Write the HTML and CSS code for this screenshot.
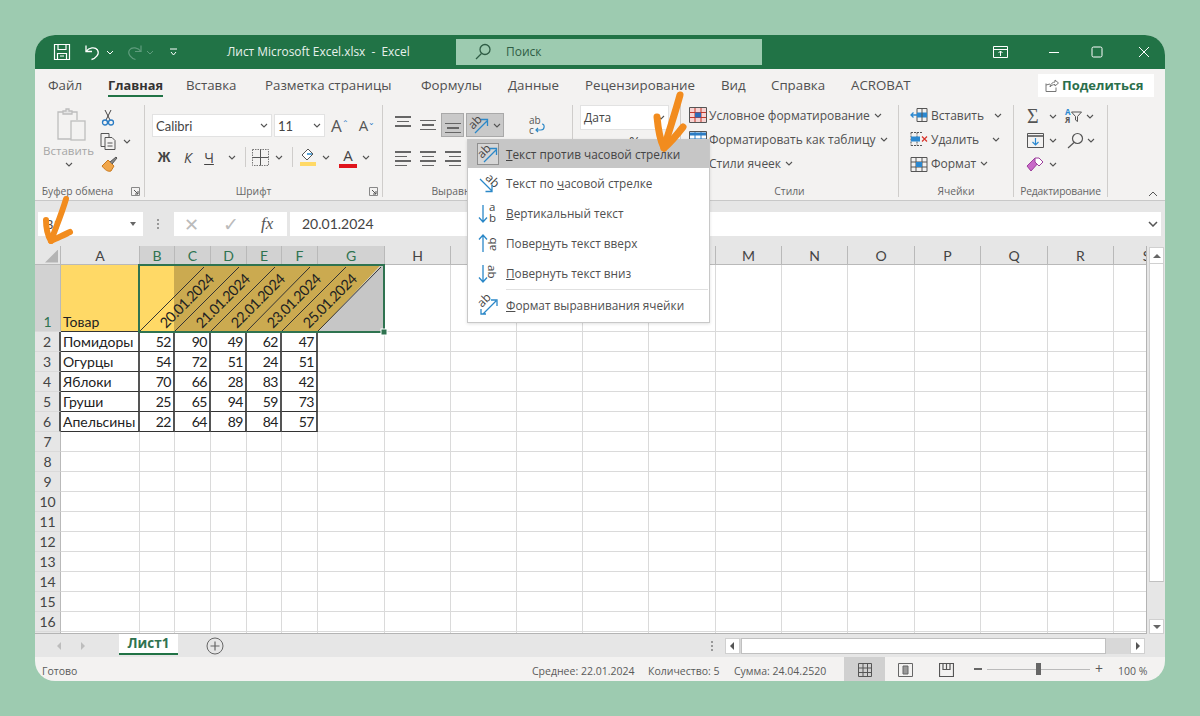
FILE: index.html
```html
<!DOCTYPE html>
<html lang="ru">
<head>
    <meta charset="UTF-8">
    <title>Лист Microsoft Excel.xlsx - Excel</title>
    <link rel="stylesheet" href="styles.css">
</head>
<body>

<svg class="defs" width="0" height="0">
    <defs>
        <symbol id="chev" viewBox="0 0 8 5"><path d="M1 1l3 3 3-3" fill="none" stroke="#555" stroke-width="1.1"/></symbol>
        <symbol id="launch" viewBox="0 0 9 9"><path d="M.5 8.5V.5h8v8z" fill="none" stroke="#888"/><path d="M3 3l4 4M7 4v3H4" fill="none" stroke="#555"/></symbol>
        <symbol id="ab-ccw" viewBox="0 0 22 22">
            <text x="2" y="13" font-size="12" fill="#444" font-family="Open Sans" transform="rotate(-45 7 11)">ab</text>
            <path d="M7 19L19 7M13 5.500h6.500V12" fill="none" stroke="#2b88c8" stroke-width="1.300"/>
        </symbol>
    </defs>
</svg>

<div class="window">

    <!-- Title bar -->
    <div class="titlebar">
        <svg class="qat-save" width="18" height="18" viewBox="0 0 18 18" fill="none" stroke="#fff" stroke-width="1.200"><path d="M1.500 1.500h15v15h-15z"/><path d="M5 1.500v5h8v-5M4.500 16.500v-6h9v6M7 13h4"/></svg>
        <svg class="qat-undo" width="17" height="17" viewBox="0 0 17 17" fill="none" stroke="#fff" stroke-width="1.300"><path d="M2 1.500v6h6"/><path d="M2 7.500c3-4 9-5 11.500-1.500 2.500 4-2 8.500-6 9.500"/></svg>
        <svg class="qat-chev" width="8" height="5" viewBox="0 0 8 5"><path d="M1 1l3 3 3-3" fill="none" stroke="#fff"/></svg>
        <svg class="qat-redo" width="17" height="17" viewBox="0 0 17 17" fill="none" stroke="#5f9c7d" stroke-width="1.200"><path d="M15 1.500v6H9"/><path d="M15 7.500c-3-4-9-5-11.500-1.500-2.500 4 2 8.500 6 9.500"/></svg>
        <svg class="qat-chev2" width="8" height="5" viewBox="0 0 8 5"><path d="M1 1l3 3 3-3" fill="none" stroke="#5f9c7d"/></svg>
        <svg class="qat-more" width="9" height="8" viewBox="0 0 9 8" fill="none" stroke="#fff"><path d="M1 1h7M2 4l2.500 3L7 4"/></svg>
        <span class="doc-title">Лист Microsoft Excel.xlsx&nbsp; -&nbsp; Excel</span>
        <div class="searchbox">
            <svg width="18" height="18" viewBox="0 0 18 18" fill="none" stroke="#2f5d45" stroke-width="1.300"><circle cx="11" cy="6.500" r="5"/><path d="M7.500 10.500L2 16"/></svg>
            <span>Поиск</span>
        </div>
        <div class="win-btns">
            <svg width="15" height="12" viewBox="0 0 15 12" fill="none" stroke="#fff"><path d="M.5.500h14v11H.5zM.5 3.500h14"/><path d="M7.500 10V5M5.500 7l2-2 2 2" /></svg>
            <svg width="12" height="12" viewBox="0 0 12 12" stroke="#fff"><path d="M1 6.500h10"/></svg>
            <svg width="12" height="12" viewBox="0 0 12 12" fill="none" stroke="#fff"><rect x="1" y="1" width="10" height="10" rx="1.500"/></svg>
            <svg width="12" height="12" viewBox="0 0 12 12" stroke="#fff"><path d="M1 1l10 10M11 1L1 11"/></svg>
        </div>
    </div>

    <!-- Tabs -->
    <div class="tabs">
        <span class="tab">Файл</span>
        <span class="tab active">Главная</span>
        <span class="tab">Вставка</span>
        <span class="tab">Разметка страницы</span>
        <span class="tab">Формулы</span>
        <span class="tab">Данные</span>
        <span class="tab">Рецензирование</span>
        <span class="tab">Вид</span>
        <span class="tab">Справка</span>
        <span class="tab">ACROBAT</span>
        <button class="share">
            <svg width="14" height="13" viewBox="0 0 14 13" fill="none" stroke="#777"><path d="M1 4.500v8h10v-4M1 6l4-1M5 8c0-3 3-5 5-5V1l3.500 3L10 7V5.500C8 5.500 6 6.500 5 8z"/></svg>
            Поделиться
        </button>
    </div>

    <!-- Ribbon -->
    <div class="ribbon">

        <div class="group g-clip">
            <div class="group-body clip-body">
                <div class="paste">
                    <svg class="paste-icon" width="30" height="34" viewBox="0 0 30 34" fill="none" stroke="#bdbdbd" stroke-width="1.300"><path d="M6 4H1v27h13"/><path d="M15 4h5v8"/><path d="M6 6V3h3V1h3v2h3v3z" fill="#e4e4e4"/><rect x="14" y="13" width="14" height="19" fill="#f3f2f1"/></svg>
                    <span class="paste-label">Вставить</span>
                    <svg width="8" height="5"><use href="#chev"/></svg>
                </div>
                <div class="clip-tools">
                    <svg width="14" height="17" viewBox="0 0 14 17" fill="none" stroke="#444"><path d="M4 1l5 10M10 1L5 11"/><circle cx="4" cy="13.500" r="2.500" stroke="#2b7cc4" stroke-width="1.300"/><circle cx="10" cy="13.500" r="2.500" stroke="#2b7cc4" stroke-width="1.300"/></svg>
                    <div class="copy-row">
                        <svg width="18" height="18" viewBox="0 0 18 18" fill="#f3f2f1" stroke="#555"><path d="M1 1.500h8v13H1z"/><path d="M5 5.500h7l3 3v9H5z"/><path d="M7.500 11h5M7.500 14h5"/></svg>
                        <svg width="8" height="5"><use href="#chev"/></svg>
                    </div>
                    <svg width="17" height="17" viewBox="0 0 17 17"><path d="M1 10l6-6 6 6-3 5c-3 1-6-1-9-5z" fill="#f0a64a" stroke="#c8791e"/><path d="M9 6l6-5 1 1-5 6" fill="#888" stroke="#555"/></svg>
                </div>
            </div>
            <div class="group-label">Буфер обмена<svg class="launch" width="9" height="9"><use href="#launch"/></svg></div>
        </div>

        <div class="group g-font">
            <div class="group-body font-body">
                <div class="row font-row1">
                    <div class="combo combo-font"><span>Calibri</span><svg width="8" height="5"><use href="#chev"/></svg></div>
                    <div class="combo combo-size"><span>11</span><svg width="8" height="5"><use href="#chev"/></svg></div>
                    <span class="grow-a">A<sup>⌃</sup></span>
                    <span class="shrink-a">A<sup>⌄</sup></span>
                </div>
                <div class="row font-row2">
                    <b class="fmt fmt-b">Ж</b>
                    <i class="fmt fmt-i">К</i>
                    <u class="fmt fmt-u">Ч</u>
                    <svg class="c1" width="8" height="5"><use href="#chev"/></svg>
                    <span class="vsep"></span>
                    <svg width="17" height="17" viewBox="0 0 17 17" fill="none" stroke="#777"><path d="M.500.500h16v16H.500z" stroke-dasharray="1.500 1"/><path d="M8.500.500v16M.500 8.500h16" stroke="#555"/></svg>
                    <svg class="c2" width="8" height="5"><use href="#chev"/></svg>
                    <span class="vsep"></span>
                    <svg width="18" height="18" viewBox="0 0 18 18"><path d="M9 1l-6 6 5 5 6-6z" fill="#fff" stroke="#555"/><path d="M8 6l5 0" stroke="#2b88c8" stroke-width="1.500"/><rect x="1" y="14" width="16" height="4" fill="#ffd966"/></svg>
                    <svg class="c3" width="8" height="5"><use href="#chev"/></svg>
                    <span class="fontcolor">A</span>
                    <svg class="c4" width="8" height="5"><use href="#chev"/></svg>
                </div>
            </div>
            <div class="group-label label-font">Шрифт<svg class="launch" width="9" height="9"><use href="#launch"/></svg></div>
        </div>

        <div class="group g-align">
            <div class="group-body align-body">
                <div class="row align-row1">
                    <span class="lines l-top"><i></i><i class="s"></i><i></i></span>
                    <span class="lines l-mid"><i></i><i class="s"></i><i></i></span>
                    <span class="align-active"><span class="lines"><i></i><i class="s"></i><i></i></span></span>
                    <span class="orient-btn"><svg width="22" height="22"><use href="#ab-ccw"/></svg><svg width="8" height="5"><use href="#chev"/></svg></span>
                    <svg class="wrap-icon" width="18" height="22" viewBox="0 0 18 22"><text x="1" y="10" font-size="10" fill="#555" font-family="Open Sans">ab</text><text x="1" y="20" font-size="10" fill="#555" font-family="Open Sans">c</text><path d="M14 10c3 0 3 6-1 6H8M10 14l-2 2 2 2" fill="none" stroke="#2b88c8" stroke-width="1.200"/></svg>
                </div>
                <div class="row align-row2">
                    <span class="lines l-left"><i></i><i class="s"></i><i></i><i class="s"></i></span>
                    <span class="lines l-center"><i></i><i class="s"></i><i></i><i class="s"></i></span>
                    <span class="lines l-right"><i></i><i class="s"></i><i></i><i class="s"></i></span>
                </div>
            </div>
            <div class="group-label label-align">Выравнивание</div>
        </div>

        <div class="group g-num">
            <div class="group-body num-body">
                <div class="combo combo-num"><span>Дата</span><svg width="8" height="5"><use href="#chev"/></svg></div>
                <div class="num-row"><span class="num-bar"></span><span class="num-pct">%</span></div>
            </div>
        </div>

        <div class="group g-styles">
            <div class="group-body list-body">
                <div class="list-row">
                    <svg width="18" height="16" viewBox="0 0 18 16"><path d="M.500.500h17v15H.500z" fill="#f6d3d3" stroke="#555"/><path d="M1 5.500h16M1 10.500h16M6 1v14M12 1v14" stroke="#c0392b"/><path d="M6 5.500h6v5H6z" fill="#2b6cb8"/></svg>
                    <span>Условное форматирование</span><svg class="sc" width="8" height="5"><use href="#chev"/></svg>
                </div>
                <div class="list-row">
                    <svg width="18" height="16" viewBox="0 0 18 16" fill="none"><path d="M.500.500h17v15H.500z" fill="#fff" stroke="#555"/><path d="M1 3h16" stroke="#2b7cc4" stroke-width="3"/><path d="M1 8h16M1 12h16M6 1v14M12 1v14" stroke="#2b7cc4"/></svg>
                    <span>Форматировать как таблицу</span><svg class="sc" width="8" height="5"><use href="#chev"/></svg>
                </div>
                <div class="list-row">
                    <svg width="18" height="16" viewBox="0 0 18 16"><path d="M.500.500h17v15H.500z" fill="#fff" stroke="#555"/></svg>
                    <span>Стили ячеек</span><svg class="sc" width="8" height="5"><use href="#chev"/></svg>
                </div>
            </div>
            <div class="group-label label-styles">Стили</div>
        </div>

        <div class="group g-cells">
            <div class="group-body list-body">
                <div class="list-row">
                    <svg width="18" height="16" viewBox="0 0 18 16" fill="none"><path d="M7 1.500h10v13H7z" stroke="#555"/><path d="M7 5.500h10v5H7z" fill="#2b88d0"/><path d="M1 8h6M3.500 5.500L1 8l2.500 2.500" stroke="#2b88d0" stroke-width="1.300"/><path d="M12 1v14" stroke="#555"/></svg>
                    <span>Вставить</span><svg class="cc1" width="8" height="5"><use href="#chev"/></svg>
                </div>
                <div class="list-row">
                    <svg width="18" height="16" viewBox="0 0 18 16" fill="none"><path d="M1 1.500h12M1 14.500h12M1 1.500v13M7 1.500v13" stroke="#555" stroke-dasharray="2 1"/><path d="M1 5.500h9v5H1z" fill="#2b88d0"/><path d="M12 5.500l5 5M17 5.500l-5 5" stroke="#d9342b" stroke-width="1.200"/></svg>
                    <span>Удалить</span><svg class="cc2" width="8" height="5"><use href="#chev"/></svg>
                </div>
                <div class="list-row">
                    <svg width="18" height="18" viewBox="0 0 18 18" fill="none"><path d="M1 3.500h16v14H1z" stroke="#555"/><path d="M1 8h16M1 13h16M6 3v15M12 3v15" stroke="#555"/><path d="M6 8h6v5H6z" fill="#2b88d0"/></svg>
                    <span>Формат</span><svg class="cc3" width="8" height="5"><use href="#chev"/></svg>
                </div>
            </div>
            <div class="group-label">Ячейки</div>
        </div>

        <div class="group g-edit">
            <div class="group-body edit-body">
                <div class="edit-row">
                    <span class="sigma">Σ</span><svg class="ec1" width="8" height="5"><use href="#chev"/></svg>
                    <span class="sort-icon"><span class="sort-az"><em>А</em><em class="sort-z">Я</em></span><svg width="11" height="11" viewBox="0 0 11 11" fill="none" stroke="#555"><path d="M.500 1h10L6.500 5.500v5l-2-1.500V5.500z"/></svg></span>
                    <svg class="ec2" width="8" height="5"><use href="#chev"/></svg>
                </div>
                <div class="edit-row">
                    <svg class="fill-icon" width="17" height="15" viewBox="0 0 17 15" fill="none"><path d="M.500.500h16v14H.500z" stroke="#555"/><path d="M1 3h15" stroke="#777" stroke-width="2"/><path d="M8.500 5v7M5.500 9l3 3 3-3" stroke="#2b88d0" stroke-width="1.200"/></svg>
                    <svg class="ec3" width="8" height="5"><use href="#chev"/></svg>
                    <svg class="find-icon" width="17" height="17" viewBox="0 0 17 17" fill="none" stroke="#555" stroke-width="1.200"><circle cx="10.500" cy="6.500" r="5"/><path d="M7 10.500L1 16"/></svg>
                    <svg class="ec4" width="8" height="5"><use href="#chev"/></svg>
                </div>
                <div class="edit-row">
                    <svg class="erase-icon" width="18" height="15" viewBox="0 0 18 15"><path d="M1 9l8-8 4 4-8 9z" fill="#c869c8" stroke="#9c3f9c"/><path d="M9 1l4-0 4 4-4 4-4-4z" fill="#fff" stroke="#9c3f9c"/></svg>
                    <svg class="ec3" width="8" height="5"><use href="#chev"/></svg>
                </div>
            </div>
            <div class="group-label label-edit">Редактирование</div>
        </div>

        <svg class="collapse" width="10" height="6" viewBox="0 0 10 6" fill="none" stroke="#555"><path d="M1 5l4-4 4 4"/></svg>
    </div>

    <!-- Formula bar -->
    <div class="formula">
        <div class="namebox"><span>B1</span><span class="drop"></span></div>
        <span class="grip"><i></i><i></i><i></i></span>
        <div class="fx-btns">
            <span class="fx-x">✕</span>
            <span class="fx-ok">✓</span>
            <span class="fx">fx</span>
        </div>
        <div class="fx-input"><span>20.01.2024</span>
            <svg width="10" height="6" viewBox="0 0 10 6" fill="none" stroke="#555" stroke-width="1.500"><path d="M1 1l4 4 4-4"/></svg>
        </div>
    </div>

    <!-- Sheet -->
    <div class="sheet-wrap">
        <div class="sheet">
            <table class="grid">
                <colgroup>
                    <col class="c-hd"><col class="c-a"><col class="c-35"><col class="c-36"><col class="c-36"><col class="c-35"><col class="c-36"><col class="c-67"><col class="c-66"><col class="c-66"><col class="c-66"><col class="c-66"><col class="c-67"><col class="c-66"><col class="c-66"><col class="c-67"><col class="c-66"><col class="c-67"><col class="c-66"><col class="c-66">
                </colgroup>
                <tr class="head">
                    <th class="corner"><div class="corner-tri"></div></th>
                    <th>A</th><th class="sel">B</th><th class="sel">C</th><th class="sel">D</th><th class="sel">E</th><th class="sel">F</th><th class="sel">G</th>
                    <th>H</th><th>I</th><th>J</th><th>K</th><th>L</th><th>M</th><th>N</th><th>O</th><th>P</th><th>Q</th><th>R</th><th>S</th>
                </tr>
                <tr class="row-first">
                    <th class="rn sel">1</th><td class="txt yellow">Товар</td><td></td><td></td><td></td><td></td><td></td><td></td>
                    <td></td><td></td><td></td><td></td><td></td><td></td><td></td><td></td><td></td><td></td><td></td><td></td>
                </tr>
                <tr>
                    <th class="rn dark">2</th><td class="txt b">Помидоры</td><td class="n b">52</td><td class="n b">90</td><td class="n b">49</td><td class="n b">62</td><td class="n b">47</td><td></td>
                    <td></td><td></td><td></td><td></td><td></td><td></td><td></td><td></td><td></td><td></td><td></td><td></td>
                </tr>
                <tr>
                    <th class="rn dark">3</th><td class="txt b">Огурцы</td><td class="n b">54</td><td class="n b">72</td><td class="n b">51</td><td class="n b">24</td><td class="n b">51</td><td></td>
                    <td></td><td></td><td></td><td></td><td></td><td></td><td></td><td></td><td></td><td></td><td></td><td></td>
                </tr>
                <tr>
                    <th class="rn dark">4</th><td class="txt b">Яблоки</td><td class="n b">70</td><td class="n b">66</td><td class="n b">28</td><td class="n b">83</td><td class="n b">42</td><td></td>
                    <td></td><td></td><td></td><td></td><td></td><td></td><td></td><td></td><td></td><td></td><td></td><td></td>
                </tr>
                <tr>
                    <th class="rn dark">5</th><td class="txt b">Груши</td><td class="n b">25</td><td class="n b">65</td><td class="n b">94</td><td class="n b">59</td><td class="n b">73</td><td></td>
                    <td></td><td></td><td></td><td></td><td></td><td></td><td></td><td></td><td></td><td></td><td></td><td></td>
                </tr>
                <tr>
                    <th class="rn dark">6</th><td class="txt b">Апельсины</td><td class="n b">22</td><td class="n b">64</td><td class="n b">89</td><td class="n b">84</td><td class="n b">57</td><td></td>
                    <td></td><td></td><td></td><td></td><td></td><td></td><td></td><td></td><td></td><td></td><td></td><td></td>
                </tr>
                <tr><th class="rn">7</th><td></td><td></td><td></td><td></td><td></td><td></td><td></td><td></td><td></td><td></td><td></td><td></td><td></td><td></td><td></td><td></td><td></td><td></td><td></td></tr>
                <tr><th class="rn">8</th><td></td><td></td><td></td><td></td><td></td><td></td><td></td><td></td><td></td><td></td><td></td><td></td><td></td><td></td><td></td><td></td><td></td><td></td><td></td></tr>
                <tr><th class="rn">9</th><td></td><td></td><td></td><td></td><td></td><td></td><td></td><td></td><td></td><td></td><td></td><td></td><td></td><td></td><td></td><td></td><td></td><td></td><td></td></tr>
                <tr><th class="rn">10</th><td></td><td></td><td></td><td></td><td></td><td></td><td></td><td></td><td></td><td></td><td></td><td></td><td></td><td></td><td></td><td></td><td></td><td></td><td></td></tr>
                <tr><th class="rn">11</th><td></td><td></td><td></td><td></td><td></td><td></td><td></td><td></td><td></td><td></td><td></td><td></td><td></td><td></td><td></td><td></td><td></td><td></td><td></td></tr>
                <tr><th class="rn">12</th><td></td><td></td><td></td><td></td><td></td><td></td><td></td><td></td><td></td><td></td><td></td><td></td><td></td><td></td><td></td><td></td><td></td><td></td><td></td></tr>
                <tr><th class="rn">13</th><td></td><td></td><td></td><td></td><td></td><td></td><td></td><td></td><td></td><td></td><td></td><td></td><td></td><td></td><td></td><td></td><td></td><td></td><td></td></tr>
                <tr><th class="rn">14</th><td></td><td></td><td></td><td></td><td></td><td></td><td></td><td></td><td></td><td></td><td></td><td></td><td></td><td></td><td></td><td></td><td></td><td></td><td></td></tr>
                <tr><th class="rn">15</th><td></td><td></td><td></td><td></td><td></td><td></td><td></td><td></td><td></td><td></td><td></td><td></td><td></td><td></td><td></td><td></td><td></td><td></td><td></td></tr>
                <tr><th class="rn">16</th><td></td><td></td><td></td><td></td><td></td><td></td><td></td><td></td><td></td><td></td><td></td><td></td><td></td><td></td><td></td><td></td><td></td><td></td><td></td></tr>
                <tr><th class="rn"></th><td></td><td></td><td></td><td></td><td></td><td></td><td></td><td></td><td></td><td></td><td></td><td></td><td></td><td></td><td></td><td></td><td></td><td></td><td></td></tr>
            </table>

            <!-- rotated header cells B1:G1 with the selection frame -->
            <svg class="rotated" width="250" height="72" viewBox="0 0 250 72">
                <rect x="1" y="1" width="35" height="67" fill="#ffd966"/>
                <path d="M36 1H243L180 68H36z" fill="#cbaa50"/>
                <path d="M243 1h3v67h-66z" fill="#c6c6c6"/>
                <g stroke="#333" stroke-width="1">
                    <path d="M2 67L66 3M37 67L101 3M73 67L137 3M109 67L172 3M144 67L208 3M180 67L243 3"/>
                </g>
                <g class="rot-text">
                    <text transform="translate(28 65) rotate(-45)">20.01.2024</text>
                    <text transform="translate(64 65) rotate(-45)">21.01.2024</text>
                    <text transform="translate(99 65) rotate(-45)">22.01.2024</text>
                    <text transform="translate(135 65) rotate(-45)">23.01.2024</text>
                    <text transform="translate(171 65) rotate(-45)">25.01.2024</text>
                </g>
                <rect x="1" y="1" width="245" height="67" fill="none" stroke="#2f7350" stroke-width="2"/>
                <rect x="243" y="65" width="6" height="6" fill="#2f7350" stroke="#fff"/>
            </svg>
        </div>
        <div class="vscroll">
            <div class="vbtn"><span class="tri-up"></span></div>
            <div class="vthumb"></div>
            <div class="vbtn vbtn-down"><span class="tri-down"></span></div>
        </div>
    </div>

    <!-- Sheet tabs -->
    <div class="sheetbar">
        <span class="tri-left nav1"></span>
        <span class="tri-right nav2"></span>
        <div class="sheet-tab">Лист1</div>
        <svg class="add-sheet" width="18" height="18" viewBox="0 0 18 18" fill="none" stroke="#666"><circle cx="9" cy="9" r="8"/><path d="M9 4.500v9M4.500 9h9" stroke-width="1.200"/></svg>
        <span class="grip grip-h"><i></i><i></i><i></i></span>
        <div class="hscroll">
            <div class="hbtn"><span class="tri-left dark"></span></div>
            <div class="hthumb"></div>
            <div class="hbtn hbtn-r"><span class="tri-right dark"></span></div>
        </div>
    </div>

    <!-- Status bar -->
    <div class="statusbar">
        <span class="stat ready">Готово</span>
        <span class="stat stat-avg">Среднее: 22.01.2024</span>
        <span class="stat stat-count">Количество: 5</span>
        <span class="stat stat-sum">Сумма: 24.04.2520</span>
        <span class="view active">
            <svg width="14" height="14" viewBox="0 0 14 14" fill="none" stroke="#555"><path d="M.500.500h13v13H.500zM.500 5h13M.500 9.500h13M5 .500v13M9.500 .500v13"/></svg>
        </span>
        <span class="view">
            <svg width="15" height="14" viewBox="0 0 15 14" fill="none" stroke="#666"><path d="M.500.500h14v13H.500z"/><path d="M5 3h5v8H5z" fill="#999"/></svg>
        </span>
        <span class="view">
            <svg width="15" height="14" viewBox="0 0 15 14" fill="none" stroke="#555" stroke-width="1.200"><path d="M.500.500h14v13H.500zM4 .500v6h7v-6M7.500 .500v6"/></svg>
        </span>
        <span class="zoom-minus"></span>
        <div class="slider"><span class="thumb"></span></div>
        <span class="zoom-plus">+</span>
        <span class="stat zoom-val">100 %</span>
    </div>

    <!-- Orientation menu -->
    <div class="menu">
        <div class="menu-item hover">
            <span class="menu-ico boxed"><svg width="22" height="22"><use href="#ab-ccw"/></svg></span>
            <span><u>Т</u>екст против часовой стрелки</span>
        </div>
        <div class="menu-item">
            <span class="menu-ico">
                <svg width="22" height="22" viewBox="0 0 22 22"><text x="8" y="10" font-size="12" fill="#444" font-family="Open Sans" transform="rotate(45 12 8)">ab</text><path d="M3 7l12 12M15 13v6.500H8.500" fill="none" stroke="#2b88c8" stroke-width="1.300"/></svg>
            </span>
            <span>Текст по <u>ч</u>асовой стрелке</span>
        </div>
        <div class="menu-item">
            <span class="menu-ico">
                <svg width="22" height="22" viewBox="0 0 22 22"><text x="12" y="9" font-size="11.500" fill="#444" font-family="Open Sans">a</text><text x="12" y="20" font-size="11.500" fill="#444" font-family="Open Sans">b</text><path d="M6 3v17M2 15.500l4 4.500 4-4.500" fill="none" stroke="#2b88c8" stroke-width="1.300"/></svg>
            </span>
            <span><u>В</u>ертикальный текст</span>
        </div>
        <div class="menu-item">
            <span class="menu-ico">
                <svg width="22" height="22" viewBox="0 0 22 22"><text x="0" y="0" font-size="11.500" fill="#444" font-family="Open Sans" transform="translate(19 19) rotate(-90)">ab</text><path d="M6 20V3M2 7.500L6 3l4 4.500" fill="none" stroke="#2b88c8" stroke-width="1.300"/></svg>
            </span>
            <span>Повер<u>н</u>уть текст вверх</span>
        </div>
        <div class="menu-item">
            <span class="menu-ico">
                <svg width="22" height="22" viewBox="0 0 22 22"><text x="0" y="0" font-size="11.500" fill="#444" font-family="Open Sans" transform="translate(11 3) rotate(90)">ab</text><path d="M6 3v17M2 15.500l4 4.500 4-4.500" fill="none" stroke="#2b88c8" stroke-width="1.300"/></svg>
            </span>
            <span><u>П</u>овернуть текст вниз</span>
        </div>
        <div class="menu-sep"></div>
        <div class="menu-item last">
            <span class="menu-ico">
                <svg width="22" height="22" viewBox="0 0 22 22"><text x="2" y="11" font-size="12" fill="#444" font-family="Open Sans" transform="rotate(-45 7 9)">ab</text><path d="M6 20L19 7M14 6h6v6M4 15v5h5" fill="none" stroke="#2b88c8" stroke-width="1.300"/></svg>
            </span>
            <span><u>Ф</u>ормат выравнивания ячейки</span>
        </div>
    </div>

    <!-- Orange hand-drawn arrows -->
    <svg class="arrow arrow-top" width="40" height="65" viewBox="0 0 40 65" fill="none" stroke="#f28c1e" stroke-width="7" stroke-linecap="round" stroke-linejoin="round"><path d="M32 5C28 20 22 38 16 58"/><path d="M9 27c1 11 3 23 7 31 6-5 12-12 19-21"/></svg>
    <svg class="arrow arrow-left" width="36" height="52" viewBox="0 0 36 52" fill="none" stroke="#f28c1e" stroke-width="6" stroke-linecap="round" stroke-linejoin="round"><path d="M26 4C22 18 16 32 11 46"/><path d="M6 25c0 8 2 16 5 21 6-3 13-6 19-9"/></svg>
</div>

</body>
</html>
```

FILE: styles.css
```css
* {
    box-sizing: border-box;
    margin: 0;
    padding: 0;
}

body {
    height: 716px;
    padding: 35px;
    background: #9dcbb0;
    font-family: "Open Sans", sans-serif;
    font-size: 12px;
    color: #444;
    overflow: hidden;
}

.defs { position: absolute; }

svg { flex: none; display: block; }

.window {
    position: relative;
    display: flex;
    flex-direction: column;
    width: 1130px;
    height: 646px;
    border-radius: 20px;
    overflow: hidden;
    background: #f3f2f1;
}

/* Title bar */
.titlebar {
    display: flex;
    align-items: center;
    height: 34px;
    padding-left: 18px;
    background: #217346;
    color: #fff;
}

.qat-undo { margin-left: 13px; }
.qat-chev { margin-left: 5px; }
.qat-redo { margin-left: 12px; }
.qat-chev2 { margin-left: 3px; }
.qat-more { margin-left: 15px; }

.doc-title {
    width: 228px;
    margin: 0 0 2px 49px;
    font-size: 11.900px;
    color: #e8f1ec;
    white-space: nowrap;
}

.searchbox {
    display: flex;
    align-items: center;
    width: 306px;
    height: 26px;
    margin-left: 1px;
    padding-left: 18px;
    background: #9dcbb0;
    color: #2f5d45;
}

.searchbox span { margin: 0 0 2px 14px; }

.win-btns {
    display: flex;
    align-items: center;
    margin-left: 231px;
}

.win-btns svg:nth-child(2) { margin-left: 40px; }
.win-btns svg:nth-child(3) { margin-left: 31px; }
.win-btns svg:nth-child(4) { margin-left: 35px; }

/* Tabs */
.tabs {
    display: flex;
    align-items: center;
    height: 32px;
    padding-left: 13px;
    font-size: 13.300px;
    color: #505050;
}

.tab {
    position: relative;
    white-space: nowrap;
}

.tab:nth-child(1) { width: 60px; }
.tab:nth-child(2) { width: 78px; }
.tab:nth-child(3) { width: 79px; }
.tab:nth-child(4) { width: 156px; }
.tab:nth-child(5) { width: 87px; }
.tab:nth-child(6) { width: 77px; }
.tab:nth-child(7) { width: 136px; }
.tab:nth-child(8) { width: 50px; }
.tab:nth-child(9) { width: 80px; }

.tab.active {
    font-weight: 700;
    font-size: 12.800px;
    color: #333;
}

.tab.active::after {
    content: "";
    position: absolute;
    left: 0;
    width: 55px;
    bottom: -3px;
    height: 2px;
    background: #217346;
}

.share {
    display: flex;
    align-items: center;
    gap: 3px;
    width: 116px;
    height: 23px;
    margin-left: auto;
    margin-right: 11px;
    padding-left: 7px;
    border: 0;
    background: #fff;
    font: 700 13px "Open Sans", sans-serif;
    color: #2b6f4b;
}

/* Ribbon */
.ribbon {
    position: relative;
    display: flex;
    height: 100px;
    padding: 4px 0 0 1px;
    border-bottom: 1px solid #c8c8c8;
}

.group {
    display: flex;
    flex-direction: column;
    height: 92px;
    border-right: 1px solid #cfcdcb;
}

.group-body { flex: 1; }

.group-label {
    position: relative;
    height: 13px;
    font-size: 10.300px;
    line-height: 15px;
    text-align: center;
    color: #666;
    white-space: nowrap;
}

.launch {
    position: absolute;
    right: 4px;
    top: 3px;
}

.row { display: flex; align-items: center; }

.g-clip { width: 109px; }
.g-font { width: 238px; }
.g-align { width: 190px; }
.g-num { width: 108px; }
.g-styles { width: 218px; }
.g-cells { width: 115px; }
.g-edit { width: 94px; }

.g-clip .group-label { padding-right: 25px; }
.label-font { padding-right: 20px; }
.label-edit { letter-spacing: -0.200px; }

.clip-body {
    display: flex;
}

.paste {
    display: flex;
    flex-direction: column;
    align-items: center;
    width: 57px;
    margin-left: 4px;
    padding-top: 3px;
}

.paste-icon { margin-left: 6px; }

.paste-label {
    margin-top: 1px;
    font-size: 11.500px;
    color: #a6a6a6;
}

.paste svg:last-child { margin-top: 4px; }

.clip-tools {
    display: flex;
    flex-direction: column;
    gap: 6px;
    margin-left: 4px;
    padding-top: 4px;
}

.copy-row {
    display: flex;
    align-items: center;
    gap: 5px;
    margin-left: -1px;
}

.combo {
    display: flex;
    align-items: center;
    justify-content: space-between;
    height: 23px;
    padding: 0 3px;
    background: #fff;
    border: 1px solid #e2e2e2;
    font-size: 12px;
    color: #444;
}

.font-body { padding: 9px 0 0 7px; }

.combo-font { width: 120px; font-family: "Lato", sans-serif; font-size: 13px; }
.combo-size { width: 51px; margin-left: 2px; font-family: "Lato", sans-serif; font-size: 13px; }

.grow-a, .shrink-a {
    font-size: 17px;
    line-height: 1;
    color: #555;
}

.grow-a { margin-left: 6px; }
.shrink-a { margin-left: 10px; font-size: 15px; }

.grow-a sup, .shrink-a sup {
    font-size: 8px;
    color: #2b7cc4;
    vertical-align: 6px;
    line-height: 0;
}

.font-row2 { margin-top: 9px; height: 22px; }

.fmt {
    width: 18px;
    text-align: center;
    font-size: 14px;
    color: #444;
}

.fmt-b { margin-left: 3px; font-family: "Liberation Sans", sans-serif; }
.fmt-i { margin-left: 6px; }
.fmt-u { margin-left: 3px; }

.c1 { margin-left: 10px; }
.c2 { margin-left: 6px; }
.c3 { margin-left: 5px; }
.c4 { margin-left: 5px; }

.vsep {
    width: 1px;
    height: 20px;
    margin: 0 6px 0 9px;
    background: #cfcdcb;
}

.fontcolor {
    width: 18px;
    margin-left: 9px;
    text-align: center;
    font-size: 15px;
    line-height: 17px;
    border-bottom: 4px solid #e0141c;
    color: #444;
}

.align-body { padding: 8px 0 0 12px; }

.lines {
    display: flex;
    flex-direction: column;
    gap: 3px;
    width: 16px;
}

.lines i {
    display: block;
    height: 1.500px;
    background: #666;
}

.lines i.s { width: 12px; margin: 0 auto; }

.l-left i.s { margin: 0; }
.l-right i.s { margin: 0 0 0 auto; }

.l-top { margin-top: -7px; }
.l-mid { margin-left: 9px; }

.align-active {
    display: flex;
    align-items: flex-end;
    justify-content: center;
    width: 23px;
    height: 24px;
    margin-left: 5px;
    padding-bottom: 3px;
    background: #c9c9c9;
    border: 1px solid #a9a9a9;
}

.orient-btn {
    display: flex;
    align-items: center;
    gap: 3px;
    width: 38px;
    height: 24px;
    margin-left: 2px;
    padding-left: 1px;
    background: #c9c9c9;
    border: 1px solid #a9a9a9;
}

.wrap-icon { margin-left: 24px; }

.align-row2 { margin-top: 14px; }
.align-row2 .lines { margin-right: 9px; }

.label-align { padding-right: 16px; }

.num-body { padding: 0 0 0 7px; }

.combo-num { width: 89px; height: 25px; }

.num-row { display: flex; align-items: center; margin-top: 2px; }

.num-bar {
    width: 17px;
    height: 2px;
    margin: 4px 0 0 4px;
    background: #666;
}

.num-pct {
    margin-left: 28px;
    font-size: 14px;
}

.list-body { padding: 0 0 0 8px; margin-top: -2px; }

.list-row {
    display: flex;
    align-items: center;
    gap: 2px;
    height: 24px;
    white-space: nowrap;
    color: #505050;
    font-size: 12px;
}

.sc { margin-left: 2px; }

.g-cells .list-body { padding-left: 11px; }
.g-cells .list-row { gap: 3px; }
.cc1 { margin-left: 7px; }
.cc2 { margin-left: 10px; }
.cc3 { margin-left: 1px; }

.edit-body { padding: 0 0 0 13px; margin-top: -1px; }

.edit-row {
    display: flex;
    align-items: center;
    height: 24px;
}

.sigma {
    width: 16px;
    font-size: 20px;
    line-height: 24px;
    color: #555;
    font-family: "Liberation Serif", serif;
}

.ec1 { margin-left: 6px; }
.ec2 { margin-left: 4px; }
.ec3 { margin-left: 5px; }
.ec4 { margin-left: 3px; }

.sort-icon {
    display: flex;
    align-items: center;
    margin-left: 8px;
}

.sort-az {
    display: flex;
    flex-direction: column;
    font: 700 8px/8px "Open Sans", sans-serif;
    color: #2b88d0;
}

.sort-az em { font-style: normal; }
.sort-az .sort-z { color: #555; }

.find-icon { margin-left: 10px; }
.fill-icon { margin-left: 0; }
.erase-icon { margin-left: -1px; }

.collapse {
    position: absolute;
    right: 7px;
    bottom: 3px;
}

/* Formula bar */
.formula {
    display: flex;
    align-items: center;
    height: 45px;
    padding: 0 4px 0 3px;
    background: #e6e6e6;
}

.namebox {
    display: flex;
    align-items: center;
    justify-content: space-between;
    width: 105px;
    height: 24px;
    padding: 0 7px;
    background: #fff;
    font-size: 13px;
}

.drop {
    width: 0;
    height: 0;
    border-left: 3.500px solid transparent;
    border-right: 3.500px solid transparent;
    border-top: 4px solid #666;
}

.grip {
    display: flex;
    flex-direction: column;
    gap: 2px;
    margin: 0 15px 0 14px;
}

.grip i {
    display: block;
    width: 2px;
    height: 2px;
    background: #999;
}

.fx-btns {
    display: flex;
    align-items: center;
    width: 113px;
    height: 24px;
    background: #fff;
    color: #bbb;
    font-size: 18px;
}

.fx-x { margin-left: 10px; }
.fx-ok { margin-left: 24px; font-size: 19px; }

.fx {
    margin-left: 22px;
    font: italic 400 17px "Liberation Serif", serif;
    color: #555;
}

.fx-input {
    display: flex;
    align-items: center;
    justify-content: space-between;
    width: 871px;
    height: 24px;
    margin-left: 3px;
    padding: 0 3px 0 12px;
    background: #fff;
    font: 14px "Lato", "Open Sans", sans-serif;
    color: #444;
}

/* Sheet */
.sheet-wrap {
    display: flex;
    height: 388px;
    background: #e6e6e6;
}

.sheet {
    position: relative;
    flex: none;
    width: 1112px;
    height: 388px;
    overflow: hidden;
    background: #fff;
    border-right: 1px solid #b4b4b4;
    border-bottom: 1px solid #b4b4b4;
}

.grid {
    table-layout: fixed;
    width: 1145px;
    border-collapse: separate;
    border-spacing: 0;
    font: 14px "Lato", "Open Sans", sans-serif;
    color: #222;
}

.c-hd { width: 26px; }
.c-a { width: 79px; }
.c-35 { width: 35px; }
.c-36 { width: 36px; }
.c-66 { width: 66px; }
.c-67 { width: 67px; }

.grid td {
    height: 20px;
    padding: 0 2px;
    border-right: 1px solid #dadada;
    border-bottom: 1px solid #dadada;
    vertical-align: bottom;
    line-height: 18px;
    white-space: nowrap;
    overflow: hidden;
}

.grid th {
    background: #e6e6e6;
    font-weight: 400;
    color: #444;
    border-right: 1px solid #b9b9b9;
    border-bottom: 1px solid #b9b9b9;
}

.grid .head th {
    height: 19px;
    line-height: 17px;
}

.grid th.sel {
    background: #d2d2d2;
    color: #2f7350;
}

.grid th.rn {
    height: 20px;
    line-height: 18px;
    padding: 0;
    text-align: center;
    vertical-align: bottom;
    border-bottom-color: #dadada;
}

.grid th.dark { border-right: 2px solid #555; }

.row-first td, .row-first th.rn { height: 67px; }

.corner { position: relative; }

.corner-tri {
    width: 13px;
    height: 13px;
    margin: 2px 2px 0 auto;
    background: #b4b4b4;
    clip-path: polygon(100% 0, 100% 100%, 0 100%);
}

.grid td.txt { padding-left: 2px; }
.grid td.n { text-align: right; padding-right: 2px; letter-spacing: -0.500px; }
.grid td.b { border-right: 2px solid #555; border-bottom-color: #333; }
.grid td.yellow { background: #ffd966; border-bottom-color: #333; }

.rotated {
    position: absolute;
    left: 103px;
    top: 18px;
}

.rot-text text {
    font: 14.500px "Lato", "Open Sans", sans-serif;
    letter-spacing: -0.500px;
    fill: #222;
}

.vscroll {
    display: flex;
    flex-direction: column;
    width: 15px;
    margin-left: 2px;
    padding-top: 1px;
}

.vbtn {
    display: flex;
    align-items: center;
    justify-content: center;
    height: 17px;
    background: #fff;
    border: 1px solid #d0d0d0;
}

.vbtn-down { margin-top: 37px; height: 15px; }

.vthumb {
    height: 318px;
    background: #fff;
    border-right: 1px solid #d0d0d0;
    border-left: 1px solid #d0d0d0;
    border-bottom: 1px solid #c0c0c0;
}

.tri-up, .tri-down, .tri-left, .tri-right { display: block; width: 0; height: 0; }

.tri-up {
    border-left: 4px solid transparent;
    border-right: 4px solid transparent;
    border-bottom: 4px solid #666;
}

.tri-down {
    border-left: 4px solid transparent;
    border-right: 4px solid transparent;
    border-top: 4px solid #666;
}

.tri-left {
    border-top: 4px solid transparent;
    border-bottom: 4px solid transparent;
    border-right: 4px solid #bdbdbd;
}

.tri-right {
    border-top: 4px solid transparent;
    border-bottom: 4px solid transparent;
    border-left: 4px solid #bdbdbd;
}

.tri-left.dark { border-right-color: #555; }
.tri-right.dark { border-left-color: #555; }

/* Sheet tabs */
.sheetbar {
    display: flex;
    align-items: center;
    height: 23px;
    background: #e6e6e6;
}

.nav1 { margin-left: 22px; }
.nav2 { margin-left: 20px; }

.sheet-tab {
    width: 59px;
    height: 21px;
    margin: -2px 0 0 34px;
    background: #fff;
    border-bottom: 2px solid #217346;
    font-size: 13.500px;
    font-weight: 700;
    line-height: 19px;
    text-align: center;
    color: #2f7350;
}

.add-sheet { margin-left: 28px; }

.grip-h { margin: 0 0 0 487px; }

.hscroll {
    display: flex;
    align-items: center;
    width: 420px;
    height: 16px;
    margin-left: 12px;
    background: #d8d8d8;
}

.hbtn {
    display: flex;
    align-items: center;
    justify-content: center;
    width: 15px;
    height: 16px;
    background: #fff;
    border: 1px solid #d0d0d0;
}

.hbtn-r { margin-left: 24px; }

.hthumb {
    width: 366px;
    height: 16px;
    margin-left: 1px;
    background: #fff;
    border: 1px solid #c0c0c0;
}

/* Status bar */
.statusbar {
    display: flex;
    align-items: center;
    height: 24px;
    padding-left: 7px;
    font-size: 10.500px;
    color: #5a5a5a;
}

.stat { padding-top: 4px; }

.ready { width: 490px; }
.stat-avg { width: 116px; }
.stat-count { width: 86px; }
.stat-sum { width: 110px; }

.view {
    display: flex;
    align-items: center;
    justify-content: center;
    width: 41px;
    height: 24px;
    padding-top: 1px;
}

.view.active { background: #d0d0d0; }

.zoom-minus {
    width: 8px;
    height: 1.500px;
    margin-left: 7px;
    background: #666;
}

.slider {
    position: relative;
    width: 103px;
    height: 1px;
    margin-left: 5px;
    background: #bbb;
}

.thumb {
    position: absolute;
    left: 49px;
    top: -6px;
    width: 5px;
    height: 12px;
    background: #666;
}

.zoom-plus {
    margin-left: 5px;
    font-size: 14px;
    line-height: 1;
}

.zoom-val { margin-left: 15px; }

/* Orientation menu */
.menu {
    position: absolute;
    left: 432px;
    top: 104px;
    width: 243px;
    height: 184px;
    background: #fff;
    border: 1px solid #c8c8c8;
    box-shadow: 0 1px 3px rgba(0, 0, 0, 0.12);
    font-size: 11.800px;
    color: #505050;
}

.menu-item {
    display: flex;
    align-items: center;
    gap: 7px;
    height: 30px;
    padding-left: 9px;
    white-space: nowrap;
}

.menu-item.hover {
    height: 28px;
    background: #c6c6c6;
    color: #444;
}

.menu-ico {
    display: flex;
    align-items: center;
    justify-content: center;
    width: 22px;
    height: 22px;
}

.menu-ico.boxed { border: 1px solid #8f8f8f; background: #d6d6d6; }

.menu-sep {
    height: 1px;
    margin: 1px 1px 0 38px;
    background: #e0e0e0;
}

/* Arrows */
.arrow { position: absolute; }

.arrow-top { left: 613px; top: 55px; }
.arrow-left { left: 5px; top: 160px; }
```
